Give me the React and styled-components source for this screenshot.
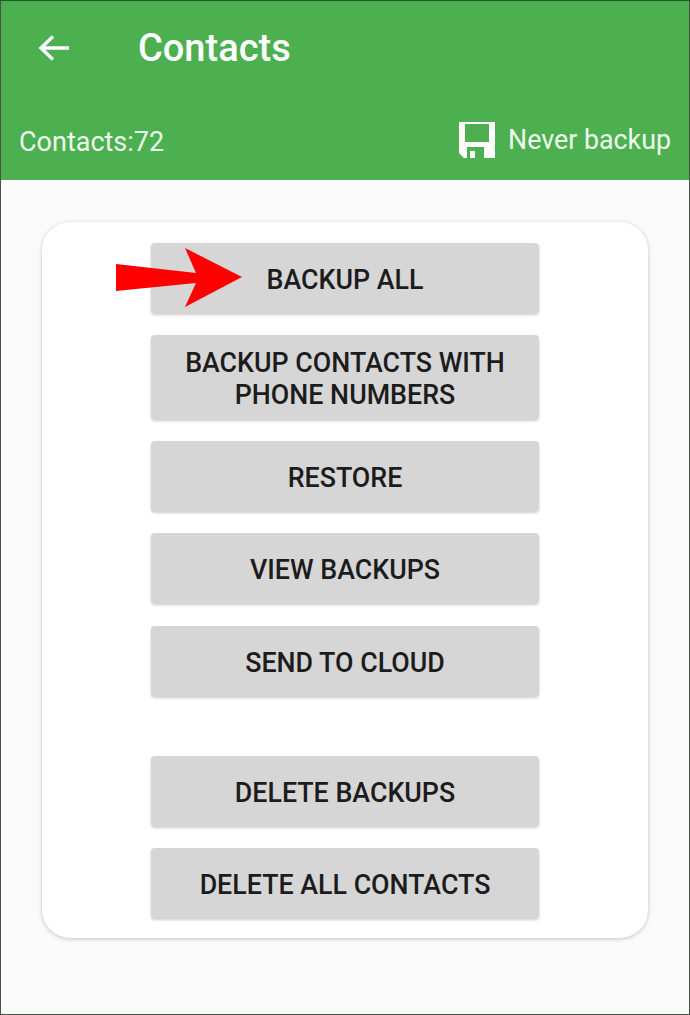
import React from 'react'
import styled, { createGlobalStyle } from 'styled-components'

const GlobalStyle = createGlobalStyle`
  html, body { margin: 0; padding: 0; background: #fafafa; }
  * { box-sizing: border-box; }
`

const Page = styled.div`
  width: 690px;
  height: 1015px;
  display: flex;
  flex-direction: column;
  overflow: hidden;
  position: relative;
  background: #fafafa;
  font-family: Roboto, "Liberation Sans", sans-serif;
`

const Frame = styled.div`
  position: absolute;
  inset: 0;
  border: 1px solid #4a4f4a;
  border-top-color: #1f5a22;
  pointer-events: none;
`

const Header = styled.header`
  height: 180px;
  flex: none;
  background: #4caf50;
  color: #fff;
  display: flex;
  flex-direction: column;
`

const TopRow = styled.div`
  height: 96px;
  display: flex;
  align-items: center;
  padding-left: 36px;
`

const BackIcon = styled.svg`
  width: 36px;
  height: 36px;
  flex: none;
  margin-right: 66px;
`

const Title = styled.h1`
  margin: 0;
  font-size: 38px;
  font-weight: 500;
  line-height: 1;
`

const InfoRow = styled.div`
  display: flex;
  align-items: center;
  justify-content: space-between;
  padding: 4px 19px 0;
  height: 84px;
`

const InfoText = styled.span`
  font-size: 26.800px;
  line-height: 1;
  color: #eefaee;
`

const ContactCount = styled(InfoText)`
  font-size: 27px;
  padding-top: 4px;
`

const BackupStatus = styled.div`
  display: flex;
  align-items: center;
  gap: 13px;
`

const Main = styled.main`
  padding: 42px 42px 0;
`

const Card = styled.section`
  height: 716px;
  background: #fff;
  border-radius: 28px;
  box-shadow: 0 1px 4px rgba(0, 0, 0, 0.22);
  padding: 21px 0 0;
  display: flex;
  flex-direction: column;
  align-items: center;
  position: relative;
`

const ActionButton = styled.button`
  width: 388px;
  height: ${p => (p.$tall ? '84px' : '70px')};
  flex: none;
  margin-bottom: ${p => p.$gap || 22}px;
  border: 0;
  border-radius: 4px;
  background: #d6d6d6;
  box-shadow: 0 2px 3px rgba(0, 0, 0, 0.2);
  color: #1c1c1c;
  font-family: inherit;
  font-size: 26.800px;
  font-weight: 500;
  line-height: 32px;
  padding: 4px 16px 0;
  text-align: center;
`

const Arrow = styled.svg`
  position: absolute;
  left: 74px;
  top: 25px;
  width: 126px;
  height: 60px;
`

export default function App() {
  return (
    <Page>
      <GlobalStyle />
      <Header>
        <TopRow>
          <BackIcon viewBox="0 0 36 36">
            <path d="M33 18H6M17 6.500 5 18l12 11.500" fill="none" stroke="#fff" strokeWidth="3.400" />
          </BackIcon>
          <Title>Contacts</Title>
        </TopRow>
        <InfoRow>
          <ContactCount>Contacts:72</ContactCount>
          <BackupStatus>
            <svg width="36" height="36" viewBox="0 0 36 36">
              <path
                fillRule="evenodd"
                d="M0 0H36V36H5L0 31ZM6 2V20H30V2ZM8 25V36H25V25ZM11 29H16V36H11Z"
                fill="#fff"
              />
            </svg>
            <InfoText>Never backup</InfoText>
          </BackupStatus>
        </InfoRow>
      </Header>
      <Main>
        <Card>
          <ActionButton>BACKUP ALL</ActionButton>
          <ActionButton $tall>BACKUP CONTACTS WITH<br />PHONE NUMBERS</ActionButton>
          <ActionButton>RESTORE</ActionButton>
          <ActionButton $gap={23}>VIEW BACKUPS</ActionButton>
          <ActionButton $gap={60}>SEND TO CLOUD</ActionButton>
          <ActionButton>DELETE BACKUPS</ActionButton>
          <ActionButton>DELETE ALL CONTACTS</ActionButton>
          <Arrow viewBox="0 0 126 60">
            <polygon points="0,17 80,26 69,1 126,30 69,60 80,36 0,44" fill="#ff0000" />
          </Arrow>
        </Card>
      </Main>
      <Frame />
    </Page>
  )
}
